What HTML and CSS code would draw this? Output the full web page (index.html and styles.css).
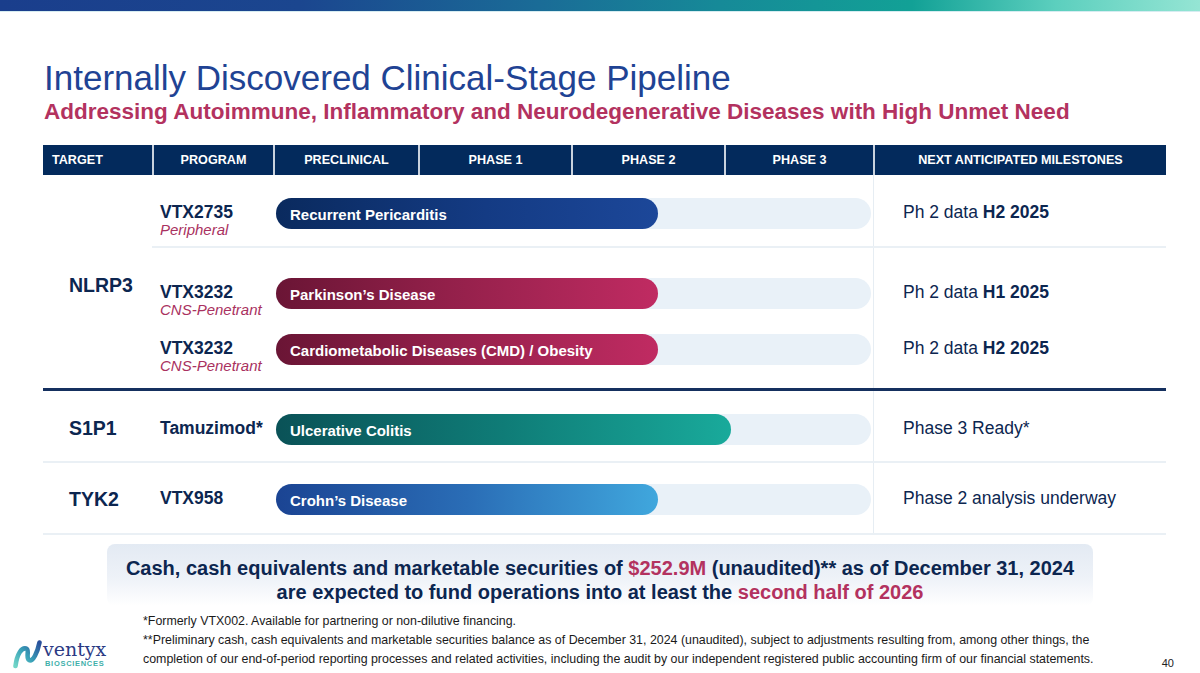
FILE: index.html
```html
<!DOCTYPE html>
<html lang="en">
<head>
<meta charset="utf-8">
<title>Internally Discovered Clinical-Stage Pipeline</title>
<link rel="stylesheet" href="styles.css">
</head>
<body>
<div class="slide">
  <div class="topbar"></div>
  <header class="titles">
    <h1>Internally Discovered Clinical-Stage Pipeline</h1>
    <h2>Addressing Autoimmune, Inflammatory and Neurodegenerative Diseases with High Unmet Need</h2>
  </header>

  <section class="pipeline">
    <div class="thead">
      <div class="th">TARGET</div>
      <div class="th">PROGRAM</div>
      <div class="th">PRECLINICAL</div>
      <div class="th">PHASE 1</div>
      <div class="th">PHASE 2</div>
      <div class="th">PHASE 3</div>
      <div class="th">NEXT ANTICIPATED MILESTONES</div>
    </div>

    <div class="group g-nlrp3">
      <div class="target">NLRP3</div>
      <div class="subrows">
        <div class="row r1">
          <div class="program"><div class="pname">VTX2735</div><div class="psub">Peripheral</div></div>
          <div class="lane"><div class="track"><div class="fill fill-blue" style="width:382px">Recurrent Pericarditis</div></div></div>
          <div class="milestone">Ph 2 data <b>H2 2025</b></div>
        </div>
        <div class="row r2">
          <div class="program"><div class="pname">VTX3232</div><div class="psub">CNS-Penetrant</div></div>
          <div class="lane"><div class="track"><div class="fill fill-red" style="width:382px">Parkinson’s Disease</div></div></div>
          <div class="milestone">Ph 2 data <b>H1 2025</b></div>
        </div>
        <div class="row r3">
          <div class="program"><div class="pname">VTX3232</div><div class="psub">CNS-Penetrant</div></div>
          <div class="lane"><div class="track"><div class="fill fill-red" style="width:382px">Cardiometabolic Diseases (CMD) / Obesity</div></div></div>
          <div class="milestone">Ph 2 data <b>H2 2025</b></div>
        </div>
      </div>
    </div>

    <div class="rule"></div>

    <div class="group g-s1p1">
      <div class="target">S1P1</div>
      <div class="subrows">
        <div class="row r4">
          <div class="program"><div class="pname">Tamuzimod*</div></div>
          <div class="lane"><div class="track"><div class="fill fill-teal" style="width:455px">Ulcerative Colitis</div></div></div>
          <div class="milestone">Phase 3 Ready*</div>
        </div>
      </div>
    </div>

    <div class="group g-tyk2">
      <div class="target">TYK2</div>
      <div class="subrows">
        <div class="row r5">
          <div class="program"><div class="pname">VTX958</div></div>
          <div class="lane"><div class="track"><div class="fill fill-sky" style="width:382px">Crohn’s Disease</div></div></div>
          <div class="milestone">Phase 2 analysis underway</div>
        </div>
      </div>
    </div>
  </section>

  <div class="cash">
    Cash, cash equivalents and marketable securities of <span class="hl">$252.9M</span> (unaudited)** as of December 31, 2024<br>
    are expected to fund operations into at least the <span class="hl">second half of 2026</span>
  </div>

  <footer class="footer">
    <div class="logo">
      <svg class="logo-mark" viewBox="0 0 30 30" width="30" height="30" aria-hidden="true">
        <defs>
          <linearGradient id="lgmark" x1="0" y1="1" x2="1" y2="0">
            <stop offset="0" stop-color="#71d5c7"/>
            <stop offset="0.45" stop-color="#3aa2b8"/>
            <stop offset="1" stop-color="#294e9b"/>
          </linearGradient>
        </defs>
        <path d="M3.5 27 C 5 15, 9.5 8.5, 14 9.5 C 18 10.5, 13.5 18.5, 17 21 C 21 23.5, 25.5 13, 27.5 3.5" fill="none" stroke="url(#lgmark)" stroke-width="4.6" stroke-linecap="round"/>
      </svg>
      <div class="logo-text">
        <div class="logo-name">ventyx</div>
        <div class="logo-sub">BIOSCIENCES</div>
      </div>
    </div>
    <div class="notes">
      *Formerly VTX002. Available for partnering or non-dilutive financing.<br>
      **Preliminary cash, cash equivalents and marketable securities balance as of December 31, 2024 (unaudited), subject to adjustments resulting from, among other things, the<br>
      completion of our end-of-period reporting processes and related activities, including the audit by our independent registered public accounting firm of our financial statements.
    </div>
    <div class="pagenum">40</div>
  </footer>
</div>
</body>
</html>
```

FILE: styles.css
```css
* { box-sizing: border-box; margin: 0; padding: 0; }

html, body {
  width: 1200px;
  height: 673px;
  overflow: hidden;
  background: #ffffff;
}

body {
  font-family: "Liberation Sans", Arial, sans-serif;
  color: #0c2650;
}

.slide {
  width: 1200px;
  height: 673px;
  display: flex;
  flex-direction: column;
}

.topbar {
  flex: none;
  height: 11px;
  background: linear-gradient(90deg, #1a3e8c 0%, #1b468f 25%, #1a6c97 45%, #168a98 60%, #12a196 76%, #5ccfbe 88%, #95e5d4 100%);
  box-shadow: 0 1px 0 #d6ecf1;
}

.titles {
  flex: none;
  padding: 47px 0 0 44px;
}

.titles h1 {
  font-size: 35px;
  font-weight: 400;
  line-height: 40px;
  color: #1f4394;
}

.titles h2 {
  margin-top: 1px;
  font-size: 22.5px;
  font-weight: 700;
  line-height: 26px;
  color: #b3325f;
  white-space: nowrap;
}

/* ---------- pipeline table ---------- */
.pipeline {
  flex: none;
  width: 1123px;
  margin: 20px 0 0 43px;
}

.thead {
  display: grid;
  grid-template-columns: 109px 121px 145px 153px 153px 149px 293px;
  height: 30px;
  background: #032a5c;
}

.th {
  display: flex;
  align-items: center;
  justify-content: center;
  border-left: 2px solid #c9d2de;
  color: #ffffff;
  font-size: 12.6px;
  font-weight: 700;
  white-space: nowrap;
}

.th:first-child {
  border-left: 0;
  justify-content: flex-start;
  padding-left: 9px;
}

.group { display: flex; }

.target {
  flex: none;
  width: 109px;
  padding-left: 26px;
  font-size: 19.5px;
  font-weight: 700;
  line-height: 22px;
  color: #0c2650;
}

.subrows {
  flex: 1;
  display: flex;
  flex-direction: column;
}

.row { display: flex; }

.program {
  flex: none;
  width: 121px;
  padding: calc(var(--pt) + 3px) 0 0 8px;
}

.pname {
  font-size: 17.5px;
  font-weight: 700;
  line-height: 22px;
  white-space: nowrap;
}

.psub {
  font-size: 15px;
  font-style: italic;
  line-height: 14px;
  color: #a93160;
  white-space: nowrap;
}

.lane {
  flex: none;
  width: 600px;
  padding: var(--pt) 2px 0 3px;
}

.track {
  height: 31px;
  border-radius: 16px;
  background: #e9f1f8;
}

.fill {
  height: 31px;
  border-radius: 16px;
  padding: 3px 0 0 14px;
  color: #ffffff;
  font-size: 15px;
  font-weight: 700;
  line-height: 28px;
  white-space: nowrap;
}

.fill-blue { background: linear-gradient(90deg, #0a2a5e 0%, #143b84 55%, #1c4799 100%); }
.fill-red  { background: linear-gradient(90deg, #6a1535 0%, #93204a 45%, #c02b62 100%); }
.fill-teal { background: linear-gradient(90deg, #0a5257 0%, #0f7c77 50%, #19aa9b 100%); }
.fill-sky  { background: linear-gradient(90deg, #1b4493 0%, #2a6db6 50%, #40a7dd 100%); }

.milestone {
  flex: 1;
  border-left: 1px solid #e6edf3;
  padding: calc(var(--pt) + 3px) 0 0 29px;
  font-size: 17.5px;
  line-height: 22px;
  white-space: nowrap;
}

.milestone b { font-weight: 700; }

.r1 { --pt: 23px; height: 73px; border-bottom: 2px solid #eaf0f5; }
.r2 { --pt: 30px; height: 74px; }
.r3 { --pt: 12px; height: 66px; }

.g-nlrp3 .target { padding-top: 99px; }

.rule {
  height: 3px;
  background: #15305f;
}

.g-s1p1, .g-tyk2 { border-bottom: 2px solid #eaf0f5; }
.r4 { --pt: 23px; height: 70px; }
.r5 { --pt: 21px; height: 70px; }
.g-s1p1 .target { padding-top: 26px; }
.g-tyk2 .target { padding-top: 25px; }

/* ---------- cash statement ---------- */
.cash {
  flex: none;
  width: 986px;
  height: 62px;
  margin: 9px auto 0;
  padding-top: 13px;
  border-radius: 8px;
  background: linear-gradient(180deg, #e3eaf3 0%, #eef2f8 55%, #ffffff 100%);
  text-align: center;
  font-size: 20px;
  font-weight: 700;
  line-height: 23.5px;
  color: #0c2650;
  white-space: nowrap;
}

.cash .hl { color: #b3325f; }

/* ---------- footer ---------- */
.footer {
  flex: 1;
  display: flex;
  align-items: flex-end;
  margin-top: 6px;
}

.logo {
  flex: none;
  width: 143px;
  padding: 0 0 4px 12px;
  display: flex;
  align-items: center;
  gap: 1px;
}

.logo-mark { flex: none; }

.logo-text { display: flex; flex-direction: column; }

.logo-name {
  font-family: "DejaVu Serif", "Liberation Serif", serif;
  font-size: 19px;
  line-height: 20px;
  color: #2b3a84;
}

.logo-sub {
  font-size: 7.5px;
  font-weight: 700;
  line-height: 10px;
  letter-spacing: 0.7px;
  color: #3fb0aa;
  padding-left: 2px;
}

.notes {
  align-self: flex-start;
  font-size: 12.4px;
  line-height: 19px;
  color: #1a1a1a;
  white-space: nowrap;
}

.pagenum {
  margin-left: auto;
  padding: 0 26px 3px 0;
  font-size: 11px;
  line-height: 14px;
  color: #222222;
}
```
